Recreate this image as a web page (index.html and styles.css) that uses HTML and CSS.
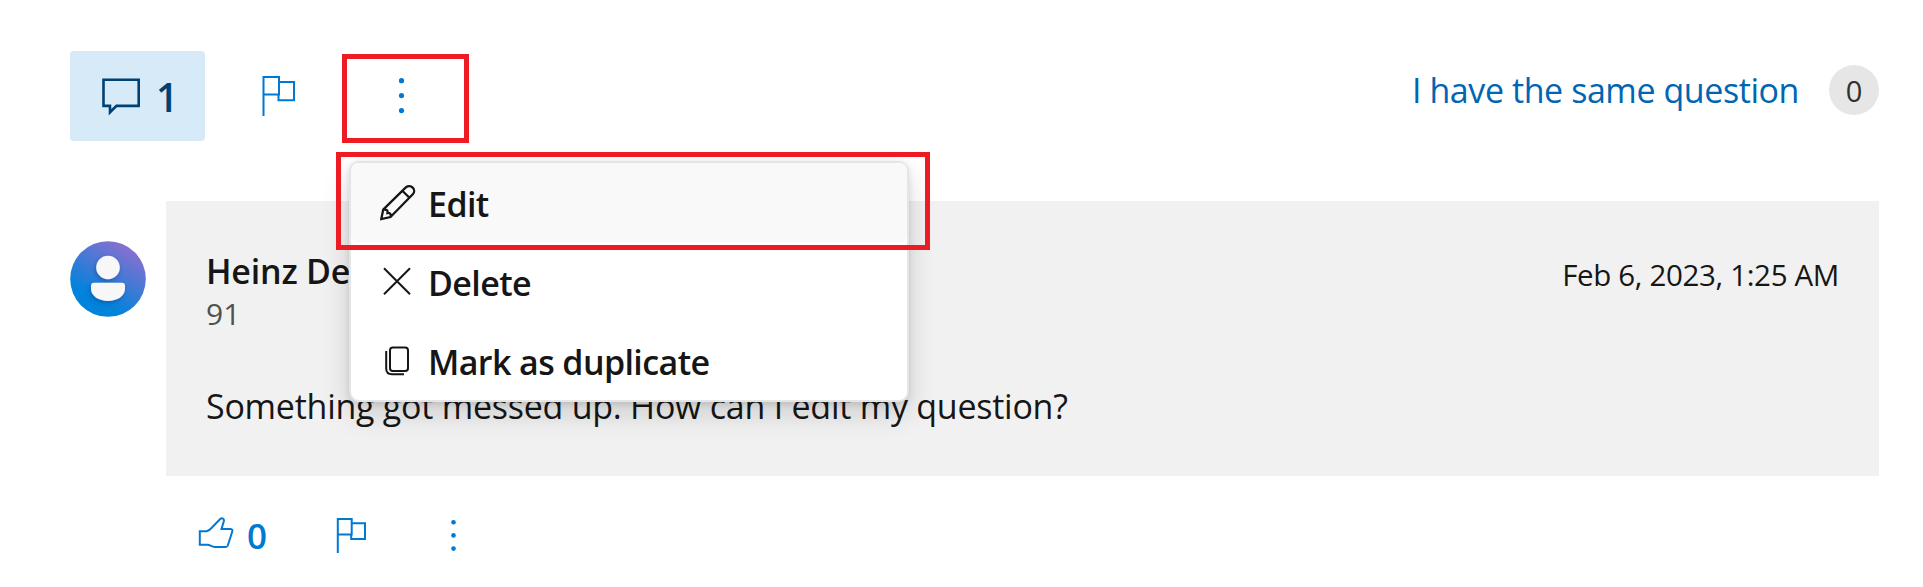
FILE: index.html
```html
<!DOCTYPE html>
<html lang="en">
<head>
    <meta charset="UTF-8">
    <meta name="viewport" content="width=device-width, initial-scale=1.0">
    <title>Question comments</title>
    <link rel="stylesheet" href="styles.css">
</head>
<body>
    <div class="toolbar">
        <button class="comment-btn">
            <svg width="42" height="40" viewBox="0 0 42 40"><path d="M3.5 3.8H38.7V29.9H16.5L10 36.3V29.9H3.5Z"/></svg>
            <span>1</span>
        </button>
        <button class="icon-btn flag-btn">
            <svg width="38" height="40" viewBox="0 0 38 40"><path d="M3.5 40V1H19V18.5H3.5M19 6H34V24.3H18.5V18.5"/></svg>
        </button>
        <div class="more">
            <button class="icon-btn">
                <svg class="dots" width="9" height="40" viewBox="0 0 9 40"><circle cx="4.5" cy="4.7" r="2.6"/><circle cx="4.5" cy="19.6" r="2.6"/><circle cx="4.5" cy="34.6" r="2.6"/></svg>
            </button>
            <div class="menu">
                <div class="menu-item active">
                    <svg class="pencil" width="36" height="36" viewBox="0 0 36 36"><path d="M1.3 34L3.2 24.6L25.8 2.4C28 .7 31 .8 32.7 2.6C34.6 4.5 34.6 7.4 32.8 9.2L10.5 32ZM22.3 5.7L29.5 12.8M3.4 24.6C6.8 24.3 8 25.3 7.5 28C10 27.6 11.2 29 10.7 31.8"/></svg>
                    <span>Edit</span>
                </div>
                <div class="menu-item">
                    <svg width="36" height="36" viewBox="0 0 36 36"><path d="M4 4.3L30 30.3M30 4.3L4 30.3"/></svg>
                    <span>Delete</span>
                </div>
                <div class="menu-item">
                    <svg width="36" height="36" viewBox="0 0 36 36"><rect x="10" y="4.5" width="18" height="23.5" rx="2.8"/><path d="M6.2 8V25.5Q6.2 31.2 12 31.2H24"/></svg>
                    <span>Mark as duplicate</span>
                </div>
            </div>
            <div class="mark mark-more"></div>
            <div class="mark mark-edit"></div>
        </div>
        <div class="same-question">
            <a>I have the same question</a>
            <span class="count">0</span>
        </div>
    </div>

    <div class="comment">
        <svg class="avatar" width="76" height="76" viewBox="0 0 76 76">
            <defs>
                <linearGradient id="sky" x1="0.22" y1="0.95" x2="0.75" y2="0.05">
                    <stop offset="0.2" stop-color="#0083db"/>
                    <stop offset="1" stop-color="#8a6fd0"/>
                </linearGradient>
                <filter id="soft" x="-50%" y="-50%" width="200%" height="200%">
                    <feDropShadow dx="-1" dy="2" stdDeviation="2" flood-color="#003a80" flood-opacity="0.45"/>
                </filter>
            </defs>
            <circle cx="38" cy="38" r="37.8" fill="url(#sky)"/>
            <g fill="#f7f7f7" filter="url(#soft)">
                <circle cx="38" cy="26.5" r="11.8"/>
                <path d="M24 41.7H52Q55 41.7 55 44.7V48C55 55 47 60 38 60S21 55 21 48V44.7Q21 41.7 24 41.7Z"/>
            </g>
        </svg>
        <div class="comment-body">
            <div class="comment-head">
                <div>
                    <div class="author">Heinz De</div>
                    <div class="points">91</div>
                </div>
                <div class="date">Feb 6, 2023, 1:25 AM</div>
            </div>
            <p>Something got messed up. How can I edit my question?</p>
        </div>
    </div>

    <div class="actions">
        <button class="icon-btn vote-btn">
            <svg width="36" height="36" viewBox="0 0 36 36"><path d="M1.8 14.2H8.2Q10.5 14 12.5 12L22.2 2C24 .5 26.5 1.5 25.8 4.2L23.5 12H32.5Q35 12.2 34.2 14.8L29.8 28.5Q29.2 30 27.6 30H16.8C13.5 29.8 12.5 28 9.5 27.8H1.8Z"/></svg>
            <span>0</span>
        </button>
        <button class="icon-btn flag-small">
            <svg width="32" height="36" viewBox="0 0 32 36"><path d="M2.8 36V1.9H16.7V17.4H2.8M16.7 6.3H30V22H16.2V17.4"/></svg>
        </button>
        <button class="icon-btn dots-small">
            <svg class="dots" width="9" height="36" viewBox="0 0 9 36"><circle cx="4.5" cy="5.3" r="2.3"/><circle cx="4.5" cy="18.4" r="2.3"/><circle cx="4.5" cy="31.6" r="2.3"/></svg>
        </button>
    </div>
</body>
</html>
```
FILE: styles.css
```css
* { box-sizing: border-box; }
body { margin: 0; padding: 51px 44px 0 70px; background: #fff; color: #161616; font-family: "Open Sans", sans-serif; font-size: 34px; }
button { font: inherit; border: 0; background: none; padding: 0; display: flex; align-items: center; }
svg { display: block; flex: none; fill: none; stroke: currentColor; stroke-width: 2; }

.toolbar { display: flex; align-items: center; height: 90px; }
.comment-btn { width: 135px; height: 90px; padding-left: 30px; gap: 14px; background: #d7eaf8; border-radius: 4px; color: #004173; font-size: 39px; font-weight: 600; }
.comment-btn svg { stroke-width: 2.6; }
.icon-btn { color: #0078d4; }
.flag-btn { margin-left: 55px; }
.dots { fill: currentColor; stroke: none; }

.more { position: relative; z-index: 2; display: flex; align-self: stretch; margin-left: 99px; }
.menu { position: absolute; left: -48px; top: 110px; width: 560px; height: 241px; display: flex; flex-direction: column; background: #fff; border: 2px solid #e5e5e5; border-radius: 10px; box-shadow: 0 12px 28px rgba(0, 0, 0, 0.15), 0 2px 7px rgba(0, 0, 0, 0.11); }
.menu-item { flex: 1; display: flex; align-items: center; gap: 12px; padding-left: 29px; border-radius: 7px; font-weight: 600; letter-spacing: -0.6px; white-space: nowrap; }
.menu-item span { padding-top: 2px; }
.menu-item.active { background: #f9f9f9; }
.pencil { stroke-width: 2.3; }
.mark { position: absolute; border: 5px solid #ed1c24; }
.mark-more { left: -55px; top: 3px; width: 127px; height: 89px; }
.mark-edit { left: -61px; top: 101px; width: 594px; height: 98px; }

.same-question { display: flex; align-items: center; gap: 30px; height: 50px; margin: 0 0 12px auto; color: #0065b3; letter-spacing: -0.43px; }
.same-question a { padding-bottom: 1px; }
.count { width: 50px; height: 50px; border-radius: 50%; background: #e6e6e6; color: #303030; font-size: 29px; line-height: 52px; text-align: center; letter-spacing: 0; }

.comment { display: flex; align-items: flex-start; gap: 20px; margin-top: 60px; }
.avatar { margin-top: 40px; stroke: none; }
.comment-body { flex: 1; height: 275px; padding: 48px 40px 0; background: #f1f1f1; }
.comment-head { display: flex; justify-content: space-between; }
.author { font-weight: 600; line-height: 44px; letter-spacing: -0.2px; }
.points { font-size: 30px; line-height: 42px; color: #505050; }
.date { margin-top: 4px; font-size: 29.5px; line-height: 44px; letter-spacing: -0.34px; }
.comment-body p { margin: 47px 0 0; line-height: 48px; letter-spacing: -0.25px; }

.actions { display: flex; align-items: center; height: 40px; margin: 39px 0 0 128px; }
.vote-btn { gap: 13px; font-size: 35px; font-weight: 600; }
.vote-btn span { padding-top: 1px; }
.vote-btn svg { margin-top: -1px; }
.flag-small { margin-left: 68px; }
.dots-small { margin-left: 82px; }
```
